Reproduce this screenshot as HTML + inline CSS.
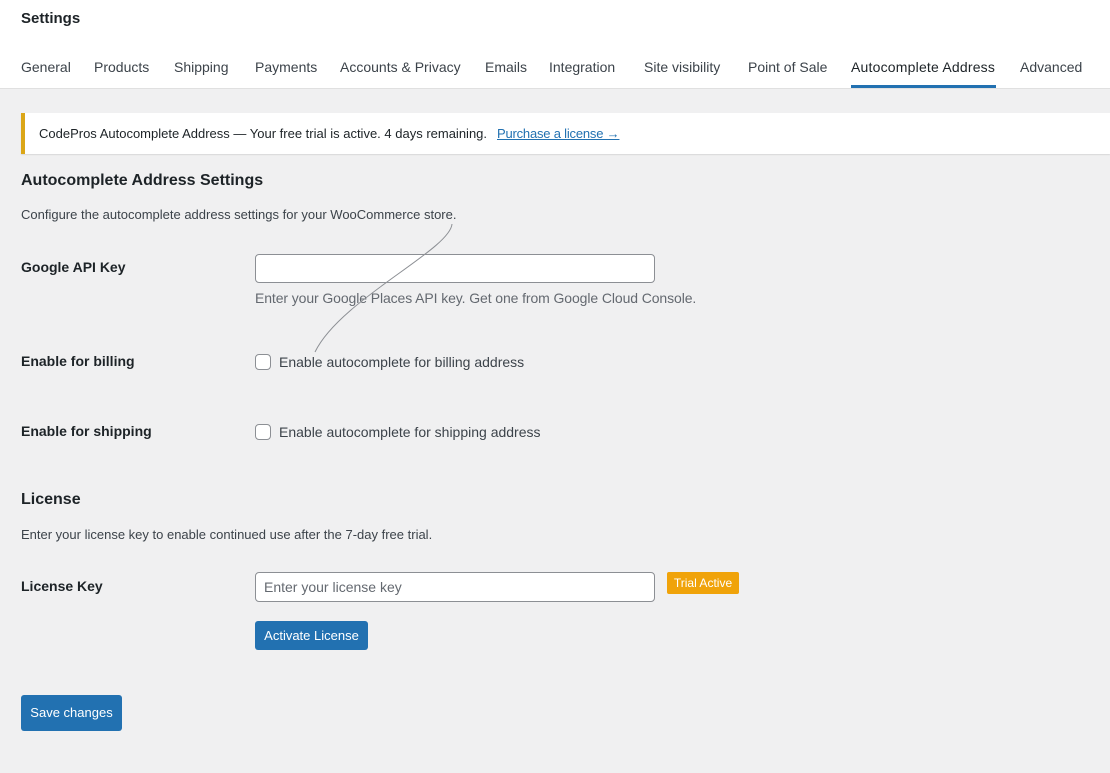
<!DOCTYPE html>
<html><head><style>
body{margin:0;width:1110px;height:773px;background:#f0f0f1;font-family:"Liberation Sans",sans-serif;color:#1d2327;position:relative;overflow:hidden}
.a{position:absolute;white-space:nowrap}
.hdr{position:absolute;left:0;top:0;width:1110px;height:88px;background:#fff;border-bottom:1px solid #e0e0e0}
.tab{position:absolute;top:59px;font-size:14px;color:#3c434a}
.lbl{font-size:14px;font-weight:bold;color:#1d2327}
.inp{position:absolute;background:#fff;border:1px solid #8c8f94;border-radius:4px;box-sizing:border-box}
.cb{position:absolute;width:16px;height:16px;border:1px solid #8c8f94;border-radius:4px;background:#fff;box-sizing:border-box}
.btn{position:absolute;background:#2271b1;color:#fff;font-size:13px;border-radius:3px;text-align:center}
</style></head><body>
<div class="hdr"></div>
<div class="a" style="left:21px;top:10px;font-size:15px;font-weight:bold;color:#1d2327">Settings</div>
<div class="tab a" style="left:21px">General</div>
<div class="tab a" style="left:94px">Products</div>
<div class="tab a" style="left:174px">Shipping</div>
<div class="tab a" style="left:255px">Payments</div>
<div class="tab a" style="left:340px">Accounts &amp; Privacy</div>
<div class="tab a" style="left:485px">Emails</div>
<div class="tab a" style="left:549px">Integration</div>
<div class="tab a" style="left:644px">Site visibility</div>
<div class="tab a" style="left:748px">Point of Sale</div>
<div class="tab a" style="left:851px;color:#1d2327;font-weight:500;letter-spacing:0.2px">Autocomplete Address</div>
<div class="a" style="left:851px;top:85px;width:145px;height:3px;background:#2271b1"></div>
<div class="tab a" style="left:1020px">Advanced</div>

<div class="a" style="left:21px;top:113px;width:1089px;height:41px;background:#fff;box-shadow:0 1px 1px rgba(0,0,0,.1);border-left:4px solid #dba617;box-sizing:border-box"></div>
<div class="a" style="left:39px;top:126px;font-size:13px;color:#1d2327">CodePros Autocomplete Address — Your free trial is active. 4 days remaining.</div>
<div class="a" style="left:497px;top:126px;font-size:13px;color:#2271b1;text-decoration:underline;letter-spacing:-0.2px">Purchase a license →</div>

<div class="a" style="left:21px;top:172px;font-size:16px;font-weight:bold;color:#1d2327">Autocomplete Address Settings</div>
<div class="a" style="left:21px;top:207px;font-size:13px;color:#3c434a">Configure the autocomplete address settings for your WooCommerce store.</div>

<div class="a lbl" style="left:21px;top:259px">Google API Key</div>
<div class="inp" style="left:255px;top:254px;width:400px;height:29px"></div>
<div class="a" style="left:255px;top:290px;font-size:14px;color:#646970;letter-spacing:-0.1px">Enter your Google Places API key. Get one from Google Cloud Console.</div>

<div class="a lbl" style="left:21px;top:353px">Enable for billing</div>
<div class="cb" style="left:255px;top:354px"></div>
<div class="a" style="left:279px;top:354px;font-size:14px;color:#3c434a">Enable autocomplete for billing address</div>

<div class="a lbl" style="left:21px;top:423px">Enable for shipping</div>
<div class="cb" style="left:255px;top:424px"></div>
<div class="a" style="left:279px;top:424px;font-size:14px;color:#3c434a">Enable autocomplete for shipping address</div>

<svg class="a" style="left:0;top:0" width="1110" height="773"><path d="M452 224 C450 250 340 300 315 352" fill="none" stroke="#8c8f94" stroke-width="1"/></svg>

<div class="a" style="left:21px;top:491px;font-size:16px;font-weight:bold;color:#1d2327">License</div>
<div class="a" style="left:21px;top:527px;font-size:13px;color:#3c434a">Enter your license key to enable continued use after the 7-day free trial.</div>
<div class="a lbl" style="left:21px;top:578px">License Key</div>
<div class="inp" style="left:255px;top:572px;width:400px;height:30px"></div>
<div class="a" style="left:264px;top:579px;font-size:14px;color:#646970">Enter your license key</div>
<div class="a" style="left:667px;top:572px;width:72px;height:22px;background:#f0a30a;border-radius:2px;color:#fff;font-size:12px;line-height:22px;text-align:center">Trial Active</div>
<div class="btn" style="left:255px;top:621px;width:113px;height:29px;line-height:29px">Activate License</div>
<div class="btn" style="left:21px;top:695px;width:101px;height:36px;line-height:36px;background:#2271b1">Save changes</div>
</body></html>
